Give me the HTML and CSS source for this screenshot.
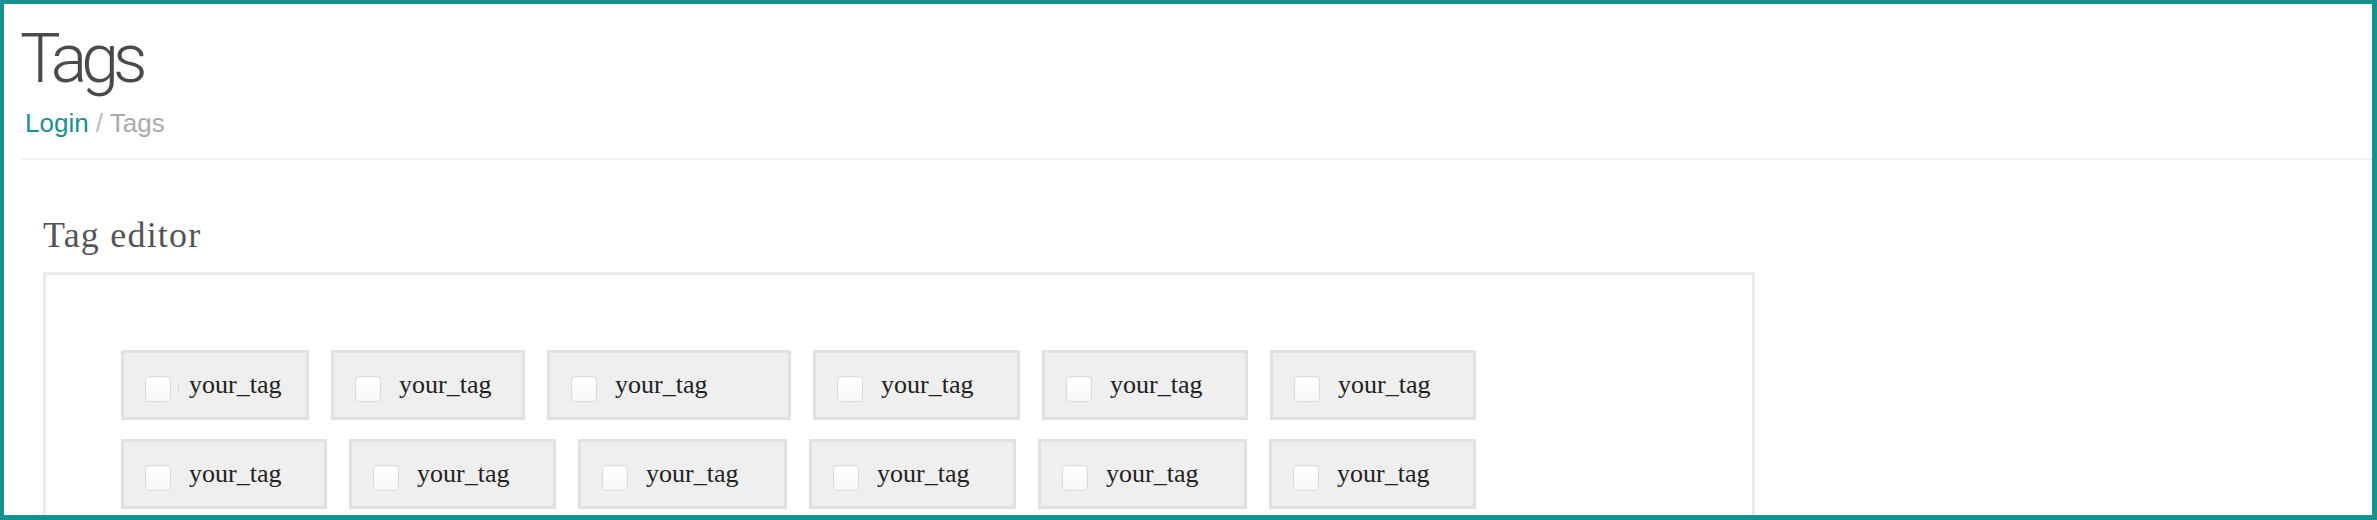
FILE: index.html
```html
<!DOCTYPE html>
<html lang="en">
<head>
<meta charset="utf-8">
<title>Tags</title>
<link rel="stylesheet" href="styles.css">
</head>
<body>
<div class="frame">
  <header class="page-header">
    <h1 class="title">Tags</h1>
    <nav class="breadcrumb"><a class="crumb-link" href="#">Login</a> <span class="crumb-sep">/</span> <span class="crumb-current">Tags</span></nav>
  </header>
  <section class="editor">
    <h2 class="editor-title">Tag editor</h2>
    <div class="panel">
      <div class="tag-row">
        <label class="tag w188"><span class="box"></span><span class="caret"></span><span class="tag-text">your_tag</span></label>
        <label class="tag w194"><span class="box"></span><span class="tag-text">your_tag</span></label>
        <label class="tag w244"><span class="box"></span><span class="tag-text">your_tag</span></label>
        <label class="tag w207"><span class="box"></span><span class="tag-text">your_tag</span></label>
        <label class="tag w206"><span class="box"></span><span class="tag-text">your_tag</span></label>
        <label class="tag w206"><span class="box"></span><span class="tag-text">your_tag</span></label>
      </div>
      <div class="tag-row">
        <label class="tag w206"><span class="box"></span><span class="tag-text">your_tag</span></label>
        <label class="tag w207"><span class="box"></span><span class="tag-text">your_tag</span></label>
        <label class="tag w209"><span class="box"></span><span class="tag-text">your_tag</span></label>
        <label class="tag w207"><span class="box"></span><span class="tag-text">your_tag</span></label>
        <label class="tag w209"><span class="box"></span><span class="tag-text">your_tag</span></label>
        <label class="tag w207"><span class="box"></span><span class="tag-text">your_tag</span></label>
      </div>
    </div>
  </section>
</div>
</body>
</html>
```

FILE: styles.css
```css
html, body {
  margin: 0;
  padding: 0;
  background: #ffffff;
}

body {
  width: 2377px;
  height: 520px;
  overflow: hidden;
}

.frame {
  box-sizing: border-box;
  width: 2377px;
  height: 520px;
  border: 4px solid #13938f;
  border-right-width: 5px;
  border-bottom-width: 5px;
  overflow: hidden;
  background: #ffffff;
}

.page-header {
  margin-left: 17px;
  padding-top: 21px;
  padding-bottom: 22px;
  border-bottom: 2px solid #f3f3f3;
}

.title {
  margin: 0 0 0 -1px;
  font-family: Roboto, "Liberation Sans", sans-serif;
  font-weight: 300;
  font-size: 68px;
  line-height: 1;
  letter-spacing: -6px;
  color: #4a4a4a;
}

.breadcrumb {
  margin-top: 17px;
  margin-left: 4px;
  font-family: "Liberation Sans", Arial, sans-serif;
  font-size: 26px;
  line-height: 1;
  color: #aaaaaa;
}

.crumb-link {
  color: #17928e;
  text-decoration: none;
}

.crumb-sep {
  color: #bbbbbb;
}

.crumb-current {
  color: #aaaaaa;
}

.editor {
  margin-left: 39px;
  padding-top: 57px;
}

.editor-title {
  margin: 0 0 19px 0;
  font-family: "Liberation Serif", "Times New Roman", serif;
  font-weight: normal;
  font-size: 36px;
  line-height: 1;
  letter-spacing: 1.2px;
  color: #555555;
}

.panel {
  box-sizing: border-box;
  width: 1712px;
  height: 400px;
  border: 3px solid #ebebeb;
  padding: 75px;
}

.tag-row {
  display: flex;
  gap: 22px;
  margin-bottom: 19px;
}

.tag {
  box-sizing: border-box;
  display: flex;
  align-items: center;
  height: 70px;
  padding-left: 21px;
  background: #efefef;
  border: 3px solid #e1e1e1;
  font-family: "Liberation Serif", "Times New Roman", serif;
  font-size: 26px;
  line-height: 1;
  color: #222222;
}

.w188 { width: 188px; }
.w194 { width: 194px; }
.w206 { width: 206px; }
.w207 { width: 207px; }
.w209 { width: 209px; }
.w244 { width: 244px; }

.box {
  box-sizing: border-box;
  flex: none;
  width: 26px;
  height: 26px;
  margin-top: 8px;
  border: 1px solid #dadada;
  border-radius: 4px;
  background: linear-gradient(#ffffff, #f7f7f7);
  box-shadow: inset 0 1px 1px rgba(0, 0, 0, 0.04);
}

.caret {
  flex: none;
  width: 1px;
  height: 9px;
  margin-left: 7px;
  margin-right: -8px;
  margin-top: 9px;
  background: #d6d6d6;
}

.tag-text {
  margin-left: 18px;
}
```
